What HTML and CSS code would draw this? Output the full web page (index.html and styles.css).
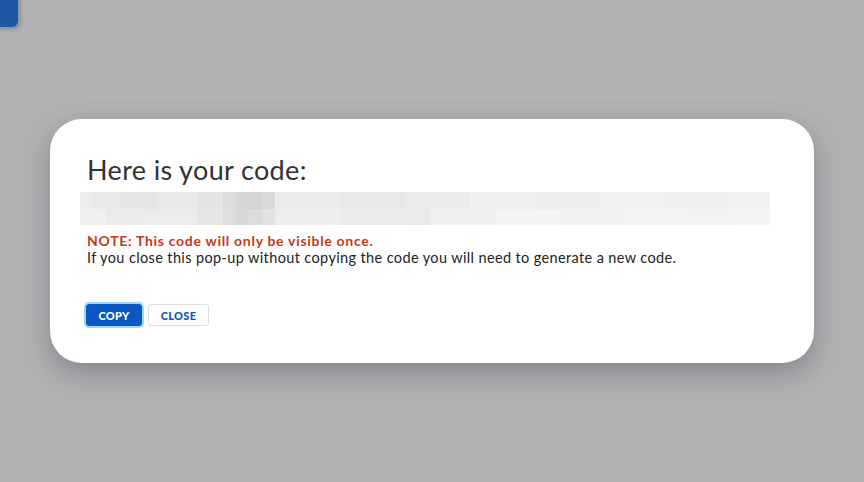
FILE: index.html
```html
<!DOCTYPE html>
<html>
<head>
	<title>Your code</title>
	<link rel="stylesheet" href="styles.css">
</head>
<body>
	<!-- page button behind the overlay -->
	<div class="behind"></div>

	<div class="overlay">
		<div class="modal">
			<h2 class="title">Here is your code:</h2>
			<div class="code">
				<div class="row top"></div>
				<div class="row bottom"></div>
			</div>
			<p class="note">NOTE: This code will only be visible once.</p>
			<p class="info">If you close this pop-up without copying the code you will need to generate a new code.</p>
			<div class="actions">
				<button class="btn primary">COPY</button>
				<button class="btn plain">CLOSE</button>
			</div>
		</div>
	</div>
</body>
</html>
```

FILE: styles.css
```css
html, body {
	margin: 0;
	height: 100%;
}
body {
	background: #b2b2b2;
	font-family: Lato, "Open Sans", sans-serif;
	color: #222;
}
.behind {
	position: absolute;
	left: -20px;
	top: -10px;
	width: 38px;
	height: 37px;
	border-radius: 6px;
	background: #1c58a4;
	box-shadow: 2px 2px 4px rgba(40, 60, 90, 0.35);
}
.overlay {
	height: 100%;
	display: flex;
	align-items: center;
	justify-content: center;
}
.modal {
	width: 764px;
	height: 244px;
	box-sizing: border-box;
	padding: 34px 44px 0 30px;
	background: #fff;
	border-radius: 32px;
	box-shadow: 0 10px 28px rgba(70, 80, 100, 0.45);
}
.title {
	margin: 0 0 5px 0;
	padding-left: 7px;
	font-size: 27px;
	font-weight: 400;
	letter-spacing: 0.35px;
	line-height: 34px;
	color: #333;
}
.code {
	height: 33px;
	display: flex;
	flex-direction: column;
}
.row {
	flex: 1;
}
.row.top {
	background: linear-gradient(90deg,
		#ececec 0 13px, #e9e9e9 13px 39px, #e6e6e6 39px 78px, #e9e9e9 78px 117px,
		#e4e4e4 117px 143px, #dcdcdc 143px 156px, #d6d6d6 156px 169px, #d4d4d4 169px 182px,
		#dadada 182px 195px, #ebebeb 195px 260px, #e8e8e8 260px 325px, #ebebeb 325px 390px,
		#efefef 390px 455px, #eeeeee 455px 520px, #f1f1f1 520px 585px, #f0f0f0 585px 650px,
		#f2f2f2 650px);
}
.row.bottom {
	background: linear-gradient(90deg,
		#efefef 0 26px, #ebebeb 26px 65px, #ececec 65px 117px, #e6e6e6 117px 143px,
		#dedede 143px 156px, #d8d8d8 156px 169px, #dcdcdc 169px 182px, #e2e2e2 182px 195px,
		#eeeeee 195px 260px, #ebebeb 260px 325px, #eaeaea 325px 351px, #f0f0f0 351px 416px,
		#f5f5f5 416px 481px, #f2f2f2 481px 546px, #f4f4f4 546px 611px, #f3f3f3 611px 650px,
		#f5f5f5 650px);
}
.note {
	margin: 7px 0 0 0;
	padding-left: 7px;
	font-size: 14px;
	font-weight: 700;
	letter-spacing: 0.7px;
	line-height: 17px;
	color: #c03a20;
}
.info {
	margin: 0;
	padding-left: 7px;
	font-size: 14.5px;
	letter-spacing: 0.37px;
	line-height: 18px;
	color: #222;
}
.actions {
	display: flex;
	gap: 6px;
	padding-left: 6px;
	margin-top: 37px;
	align-items: center;
}
.btn {
	font-family: inherit;
	font-size: 11px;
	font-weight: 900;
	letter-spacing: 0.3px;
	height: 22px;
	padding: 0 10px;
	border-radius: 3px;
	cursor: pointer;
}
.primary {
	background: #0b58c4;
	color: #fff;
	border: 1px solid #0b58c4;
	box-shadow: 0 0 0 2px #9ed6f6;
	width: 56px;
}
.plain {
	background: #fff;
	color: #0b58c4;
	border: 1px solid #dedede;
	width: 61px;
}
```
